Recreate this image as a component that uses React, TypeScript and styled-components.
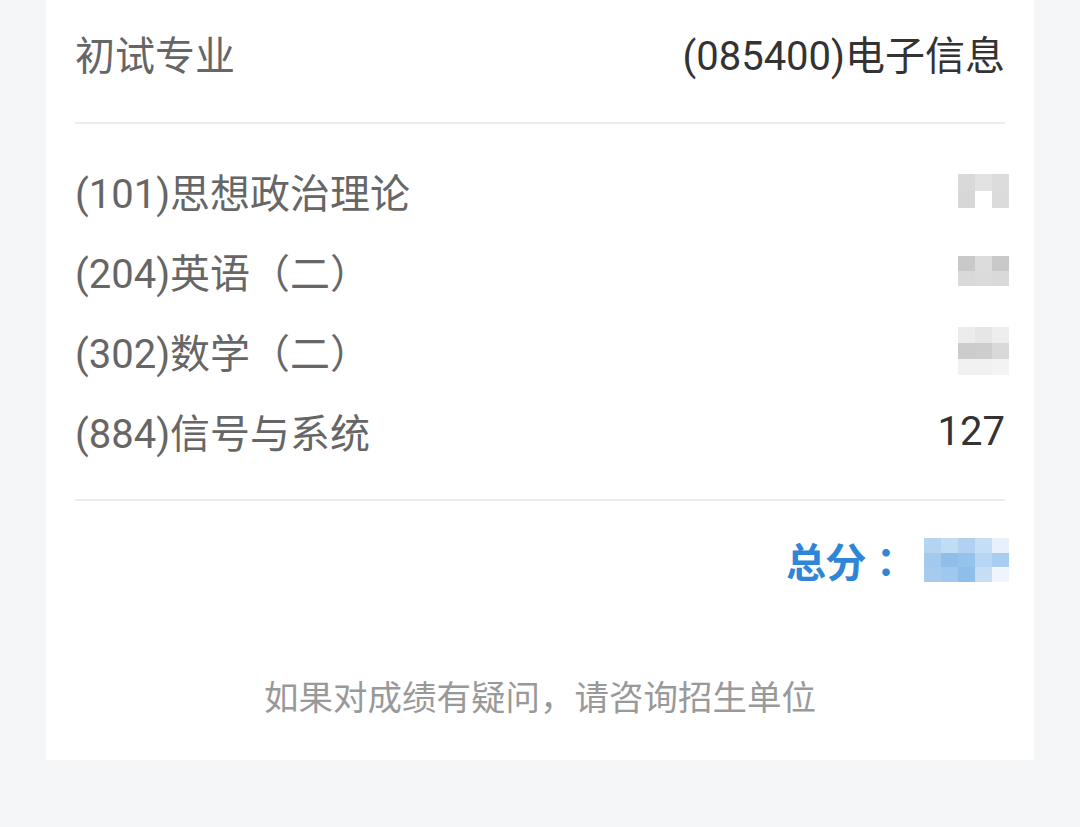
import React from "react";
import styled, { createGlobalStyle } from "styled-components";

const Global = createGlobalStyle`
  html, body { margin: 0; padding: 0; background: #f5f6f8; }
  body { font-family: Roboto, "Noto Sans CJK SC", sans-serif; }
`;

const Page = styled.div`
  width: 1080px;
  height: 827px;
  background: #f5f6f8;
  padding-left: 46px;
  box-sizing: border-box;
`;

const Card = styled.div`
  width: 988px;
  height: 760px;
  background: #ffffff;
  padding: 0 29px;
  box-sizing: border-box;
  display: flex;
  flex-direction: column;
`;

const HeaderRow = styled.div`
  height: 122px;
  padding-bottom: 16px;
  box-sizing: border-box;
  display: flex;
  align-items: center;
  justify-content: space-between;
  font-size: 40px;
`;

const Label = styled.span`
  color: #666666;
`;

const Value = styled.span`
  color: #333333;
`;

const Divider = styled.div`
  height: 2px;
  background: #ececec;
`;

const Subjects = styled.div`
  display: flex;
  flex-direction: column;
  padding: 27px 0 28px;
`;

const SubjectRow = styled.div`
  height: 80px;
  display: flex;
  align-items: center;
  justify-content: space-between;
  font-size: 40px;
`;

const Mosaic = styled.div<{ $cols: number; $w: number; $h: number }>`
  display: grid;
  grid-template-columns: repeat(${(p) => p.$cols}, 1fr);
  width: ${(p) => p.$w}px;
  height: ${(p) => p.$h}px;
  margin-right: -4px;
`;

const Cell = styled.div<{ $c: string }>`
  background: ${(p) => p.$c};
`;

const TotalRow = styled.div`
  display: flex;
  justify-content: flex-end;
  align-items: center;
  height: 46px;
  margin-top: 36px;
  gap: 18px;
`;

const TotalLabel = styled.span`
  color: #2f86d6;
  font-size: 40px;
  font-weight: 700;
  font-family: "Noto Sans CJK JP", "Noto Sans CJK SC", sans-serif;
`;

const Footer = styled.div`
  margin-top: 87px;
  text-align: center;
  color: #999999;
  font-size: 34.5px;
  font-family: "Noto Sans CJK SC", sans-serif;
`;

type MosaicSpec = { cols: number; w: number; h: number; cells: string[] };

const subjects: { name: string; score?: string; mosaic?: MosaicSpec }[] = [
  {
    name: "(101)思想政治理论",
    mosaic: {
      cols: 3,
      w: 51,
      h: 34,
      cells: ["#d9d9d9", "#e2e2e2", "#dcdcdc", "#d7d7d7", "#ffffff", "#dbdbdb"],
    },
  },
  {
    name: "(204)英语（二）",
    mosaic: {
      cols: 3,
      w: 51,
      h: 30,
      cells: ["#c9c9c9", "#dcdcdc", "#c9c9c9", "#d9d9d9", "#dbdbdb", "#d9d9d9"],
    },
  },
  {
    name: "(302)数学（二）",
    mosaic: {
      cols: 3,
      w: 51,
      h: 48,
      cells: [
        "#ececec", "#e6e6e6", "#eeeeee",
        "#cccccc", "#cdcdcd", "#d9d9d9",
        "#f1f1f1", "#f1f1f1", "#f3f3f3",
      ],
    },
  },
  { name: "(884)信号与系统", score: "127" },
];

const totalMosaic: MosaicSpec = {
  cols: 5,
  w: 85,
  h: 44,
  cells: [
    "#b4d4f2", "#c2dcf4", "#b0d1f1", "#c6def5", "#e6f1fb",
    "#a3c9ee", "#8fbeea", "#96c3ec", "#b6d6f3", "#a9cdf0",
    "#a6cbef", "#a0c7ee", "#8fbeea", "#c5ddf5", "#eef5fc",
  ],
};

const renderMosaic = (m: MosaicSpec) => (
  <Mosaic $cols={m.cols} $w={m.w} $h={m.h}>
    {m.cells.map((c, i) => (
      <Cell key={i} $c={c} />
    ))}
  </Mosaic>
);

export default function App() {
  return (
    <>
      <Global />
      <Page>
        <Card>
          <HeaderRow>
            <Label>初试专业</Label>
            <Value>(085400)电子信息</Value>
          </HeaderRow>
          <Divider />
          <Subjects>
            {subjects.map((s) => (
              <SubjectRow key={s.name}>
                <Label>{s.name}</Label>
                {s.score ? <Value>{s.score}</Value> : s.mosaic && renderMosaic(s.mosaic)}
              </SubjectRow>
            ))}
          </Subjects>
          <Divider />
          <TotalRow>
            <TotalLabel>总分：</TotalLabel>
            {renderMosaic(totalMosaic)}
          </TotalRow>
          <Footer>如果对成绩有疑问，请咨询招生单位</Footer>
        </Card>
      </Page>
    </>
  );
}
